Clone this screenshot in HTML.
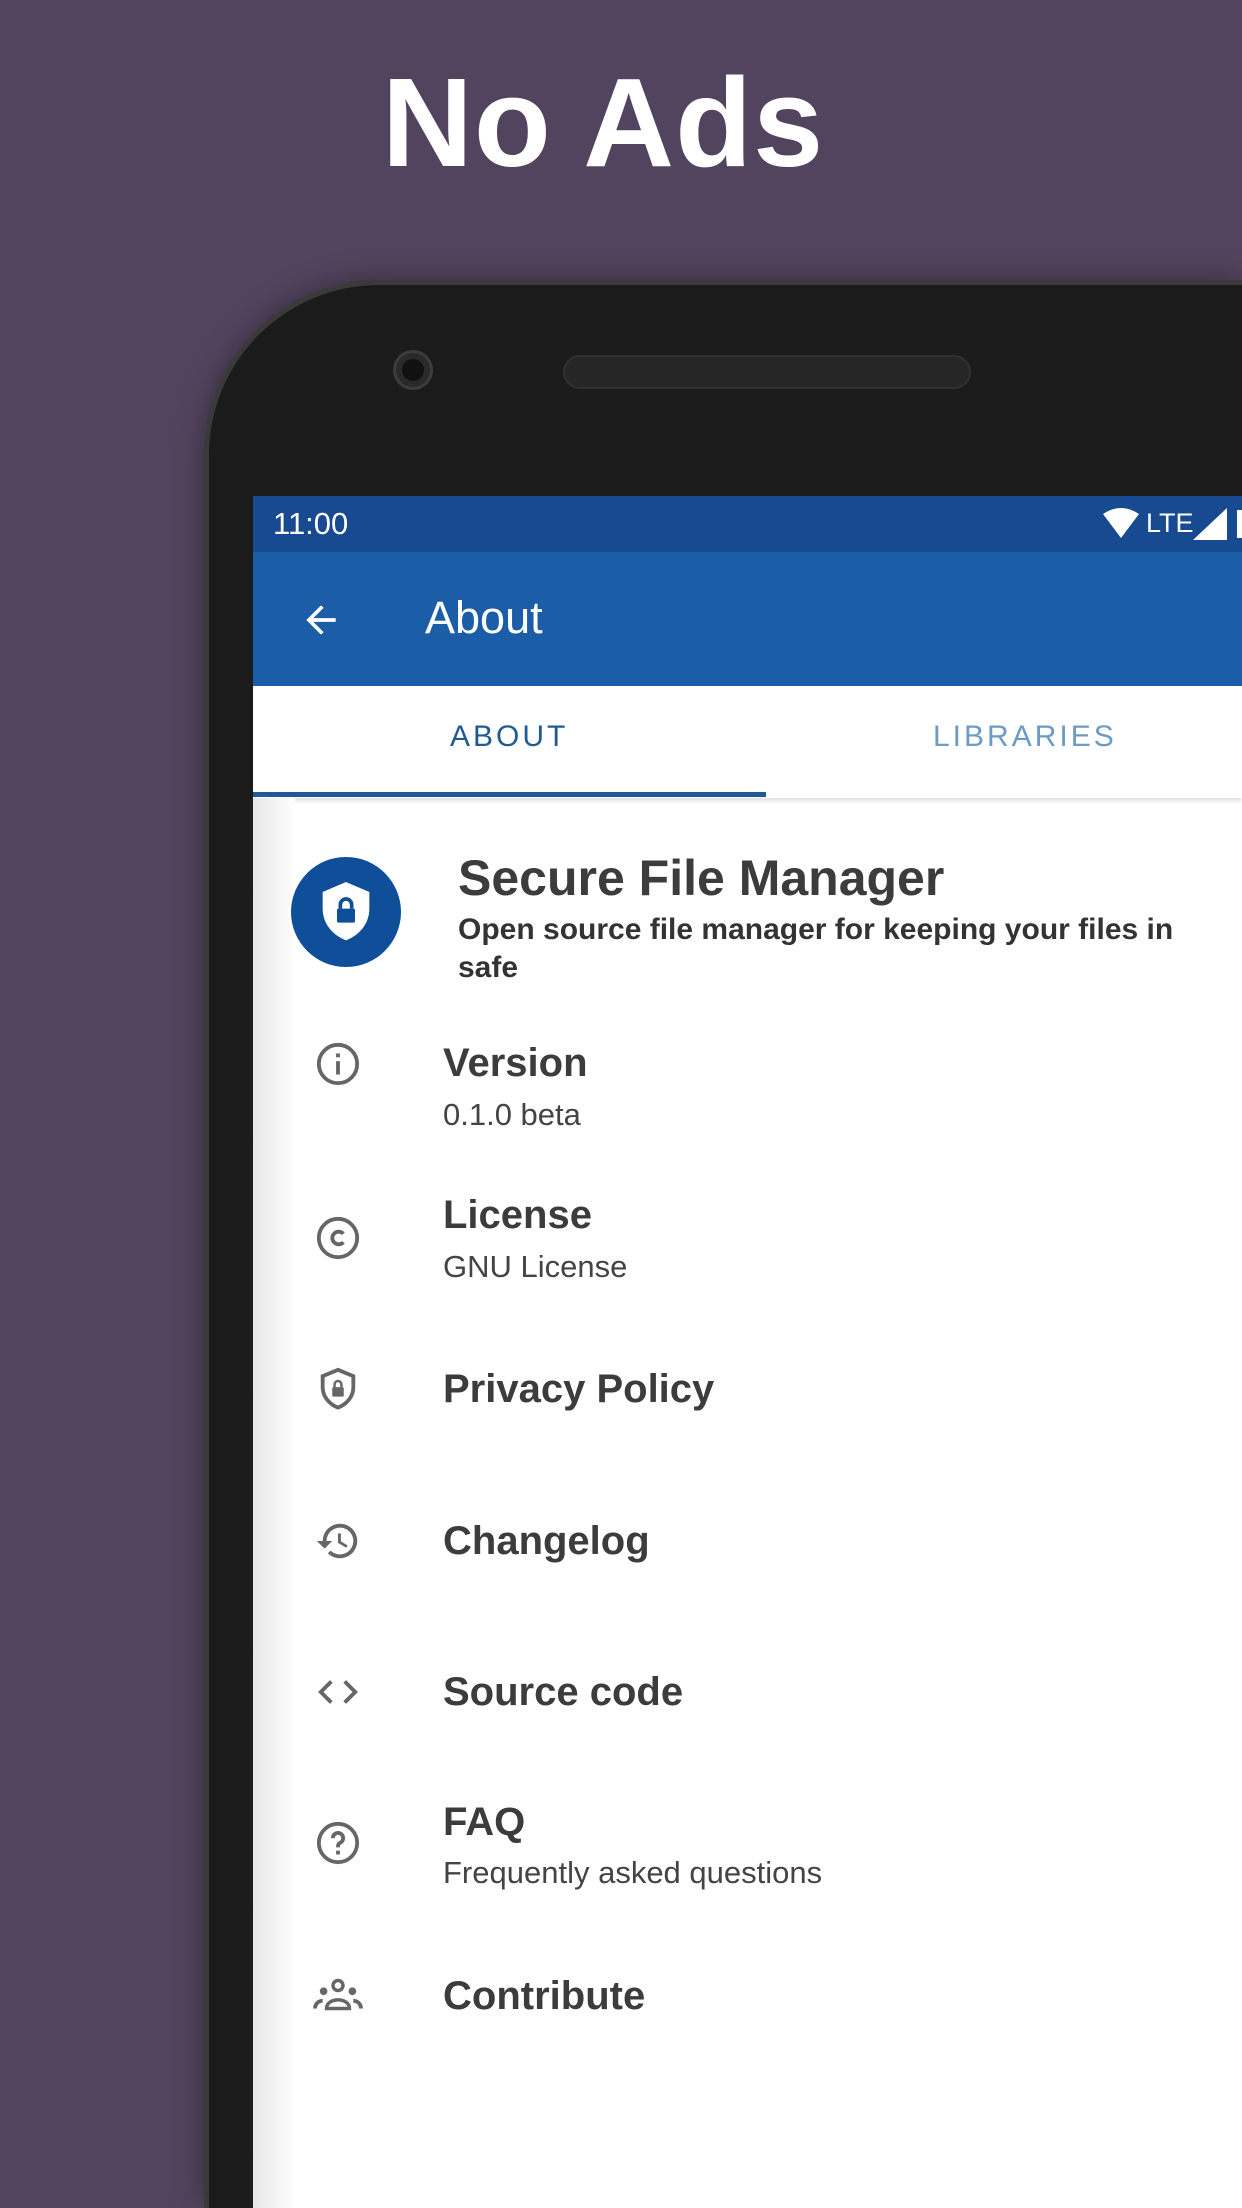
<!DOCTYPE html>
<html><head><meta charset="utf-8"><style>
*{margin:0;padding:0;box-sizing:border-box}
html,body{width:1242px;height:2208px;overflow:hidden}
body{background:#52445e;font-family:"Liberation Sans",sans-serif}
#wrap{position:relative;width:1242px;height:2208px;overflow:hidden}
.abs{position:absolute}
h1{position:absolute;left:0;width:1206px;text-align:center;top:50px;font-size:126px;font-weight:bold;color:#fff;letter-spacing:1px}
.phone{left:204px;top:280px;width:1038px;height:1928px;border-radius:175px 0 0 0;background:#1b1b1b;border:5px solid #3a3a3a;border-right:none;border-bottom:none;box-shadow:0 0 30px rgba(0,0,0,.35)}
.screen{left:253px;top:496px;width:989px;height:1712px;background:#fff;overflow:hidden}
.status{left:0;top:0;width:989px;height:56px;background:#174a90;color:#fff;font-size:31px}
.toolbar{left:0;top:56px;width:989px;height:134px;background:#1b5ea7}
.tabs{left:0;top:190px;width:989px;height:112px;background:#fff;box-shadow:0 3px 4px rgba(0,0,0,.12)}
.tab{top:34px;font-size:30px;letter-spacing:3px}
.t{position:absolute;left:190px;font-size:40px;font-weight:bold;color:#3c3c3c}
.s{position:absolute;left:190px;font-size:31px;color:#444}
.ic{position:absolute;left:62px;width:46px;height:46px}
.shade{left:0;top:302px;width:42px;height:1410px;background:linear-gradient(90deg,#e6e6e6,#f7f7f7 70%,#fff)}
</style></head><body><div id="wrap">
<h1>No Ads</h1>
<div class="abs phone"></div>
<div class="abs" style="left:393px;top:350px;width:40px;height:40px;border-radius:50%;background:#2a2a2a;border:3px solid #3c3c3c"></div>
<div class="abs" style="left:402px;top:359px;width:22px;height:22px;border-radius:50%;background:#111"></div>
<div class="abs" style="left:563px;top:355px;width:408px;height:34px;border-radius:17px;background:#262626;border:2px solid #303030"></div>
<div class="abs screen">
 <div class="abs status"><span style="position:absolute;left:20px;top:10px">11:00</span>
  <svg style="position:absolute;left:850px;top:12px" width="36" height="32" viewBox="0 0 36 32"><path d="M0 6 Q18 -6 36 6 L18 30Z" fill="#fff"/></svg>
  <span style="position:absolute;left:893px;top:12px;font-size:27px">LTE</span>
  <svg style="position:absolute;left:940px;top:12px" width="36" height="32"><path d="M34 0 L34 32 L0 32Z" fill="#fff"/></svg>
  <div style="position:absolute;left:984px;top:14px;width:5px;height:28px;background:#fff"></div>
 </div>
 <div class="abs toolbar">
  <svg style="position:absolute;left:46px;top:46px" width="44" height="44" viewBox="0 0 24 24"><path d="M20 11H7.8l5.6-5.6L12 4l-8 8 8 8 1.4-1.4L7.8 13H20z" fill="#fff"/></svg>
  <span style="position:absolute;left:172px;top:40px;font-size:45px;color:#fff">About</span>
 </div>
 <div class="abs tabs">
  <span class="abs tab" style="left:197px;color:#1f5a96">ABOUT</span>
  <span class="abs tab" style="left:680px;color:#6c9bc4">LIBRARIES</span>
  <div class="abs" style="left:0;top:106px;width:513px;height:5px;background:#1f5a96"></div>
 </div>
 <div class="abs shade"></div>
 <div class="abs" style="left:38px;top:361px;width:110px;height:110px;border-radius:50%;background:#0f4f99"></div>
 <svg class="abs" style="left:53px;top:376px" width="80" height="80" viewBox="0 0 24 24"><path d="M12 3 L19 6 V11 C19 15.5 16 19 12 20.5 C8 19 5 15.5 5 11 V6Z" fill="#fff"/><rect x="9.3" y="11" width="5.4" height="4.2" rx=".5" fill="#0f4f99"/><path d="M10.3 11V9.8a1.7 1.7 0 0 1 3.4 0V11" stroke="#0f4f99" stroke-width="1.1" fill="none"/></svg>
 <div class="t" style="left:205px;top:353px;font-size:50px">Secure File Manager</div>
 <div class="abs" style="left:205px;top:415px;font-size:30px;font-weight:bold;color:#333;line-height:38px;width:780px">Open source file manager for keeping your files in safe</div>

 <svg class="ic" style="top:545px" viewBox="0 0 24 24"><circle cx="12" cy="12" r="10" stroke="#666" stroke-width="2" fill="none"/><rect x="11" y="10.5" width="2" height="7" fill="#666"/><rect x="11" y="6.5" width="2" height="2" fill="#666"/></svg>
 <div class="t" style="top:545px">Version</div><div class="s" style="top:601px">0.1.0 beta</div>

 <svg class="ic" style="top:719px" viewBox="0 0 24 24"><circle cx="12" cy="12" r="10" stroke="#666" stroke-width="2" fill="none"/><path d="M14.8 9.8a3.3 3.3 0 1 0 0 4.4" stroke="#666" stroke-width="2" fill="none"/></svg>
 <div class="t" style="top:697px">License</div><div class="s" style="top:753px">GNU License</div>

 <svg class="ic" style="top:870px" viewBox="0 0 24 24"><path d="M12 2 L20 5.3 V11 C20 16 16.5 20 12 21.7 C7.5 20 4 16 4 11 V5.3Z" stroke="#666" stroke-width="2" fill="none"/><rect x="9" y="11" width="6" height="5" rx=".6" fill="#666"/><path d="M10.2 11V9.6a1.8 1.8 0 0 1 3.6 0V11" stroke="#666" stroke-width="1.3" fill="none"/></svg>
 <div class="t" style="top:871px">Privacy Policy</div>

 <svg class="ic" style="top:1022px" viewBox="0 0 24 24"><path d="M13 3a9 9 0 0 0-9 9H1l4 4 4-4H6a7 7 0 1 1 2.1 5l-1.4 1.4A9 9 0 1 0 13 3zm-1 5v5l4.3 2.5.7-1.2-3.5-2.1V8z" fill="#666"/></svg>
 <div class="t" style="top:1023px">Changelog</div>

 <svg class="ic" style="top:1173px" viewBox="0 0 24 24"><path d="M8.5 6.5 3 12l5.5 5.5M15.5 6.5 21 12l-5.5 5.5" stroke="#666" stroke-width="2" fill="none"/></svg>
 <div class="t" style="top:1174px">Source code</div>

 <svg class="ic" style="top:1324px" viewBox="0 0 24 24"><circle cx="12" cy="12" r="10" stroke="#666" stroke-width="2" fill="none"/><path d="M9.3 9.5a2.7 2.7 0 1 1 3.8 2.4c-.8.4-1.1.9-1.1 1.8v.6" stroke="#666" stroke-width="2" fill="none"/><rect x="11" y="16" width="2" height="2" fill="#666"/></svg>
 <div class="t" style="top:1304px">FAQ</div><div class="s" style="top:1359px">Frequently asked questions</div>

 <svg class="ic" style="top:1478px;left:58px;width:54px" viewBox="0 0 28 24"><circle cx="14" cy="6" r="2.6" stroke="#666" stroke-width="1.8" fill="none"/><circle cx="6.5" cy="9" r="2" fill="#666"/><circle cx="21.5" cy="9" r="2" fill="#666"/><path d="M8 18c0-3 3-4.5 6-4.5s6 1.5 6 4.5z" stroke="#666" stroke-width="1.8" fill="none"/><path d="M2 18c0-2 1.5-4 4-4M26 18c0-2-1.5-4-4-4" stroke="#666" stroke-width="2" fill="none"/></svg>
 <div class="t" style="top:1478px">Contribute</div>
</div>
</div></body></html>
